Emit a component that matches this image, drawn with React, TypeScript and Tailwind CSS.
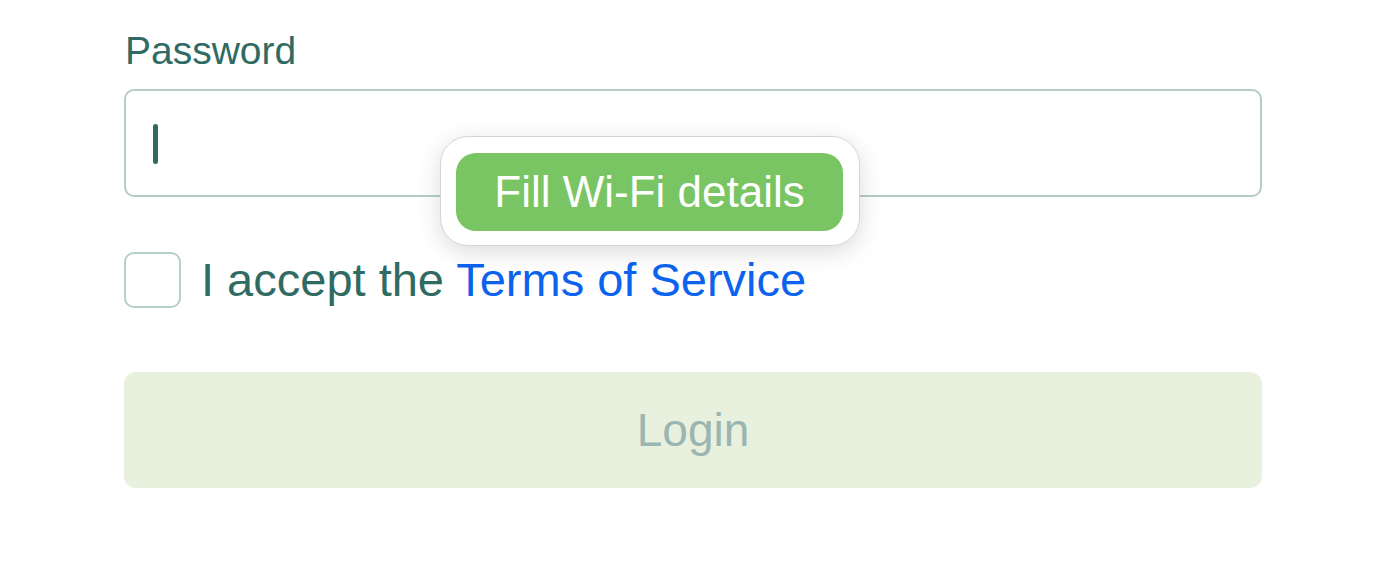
import React from "react";

export default function App() {
  return (
    <div className="w-[1380px] h-[570px] bg-white overflow-hidden" style={{ fontFamily: '"Liberation Sans", Arial, sans-serif' }}>
      <div className="relative ml-[124px] w-[1138px] pt-[28px] flex flex-col">
        <div className="text-[39px] leading-[46px] text-[#2f6b63] pl-[1px]">Password</div>
        <div className="mt-[15px] h-[108px] rounded-[10px] border-2 border-[#b5cccb] bg-white flex items-center pl-[27px]">
          <div className="w-[5px] h-[40px] rounded-full bg-[#2f6b63] mt-[2px]" />
        </div>
        <div className="mt-[55px] flex items-center h-[56px]">
          <div className="w-[57px] h-[56px] rounded-[10px] border-2 border-[#b8cecd] bg-white shrink-0" />
          <div className="ml-[20px] text-[47px] leading-[56px] text-[#2f6b63] whitespace-nowrap">
            I accept the <span className="text-[#0b63ee]">Terms of Service</span>
          </div>
        </div>
        <button className="mt-[64px] h-[116px] rounded-[12px] bg-[#e8f0de] text-[#9bb6b2] text-[46px] leading-none flex items-center justify-center">
          Login
        </button>

        <div className="absolute left-[316px] top-[136px] w-[420px] h-[110px] rounded-[28px] bg-white border border-[#d4d6d4] shadow-[0_6px_24px_rgba(0,0,0,0.14)] pl-[15px] pt-[16px]">
          <div className="w-[387px] h-[78px] rounded-[20px] bg-[#79c463] text-white text-[44px] leading-none flex items-center justify-center">
            Fill Wi-Fi details
          </div>
        </div>
      </div>
    </div>
  );
}
